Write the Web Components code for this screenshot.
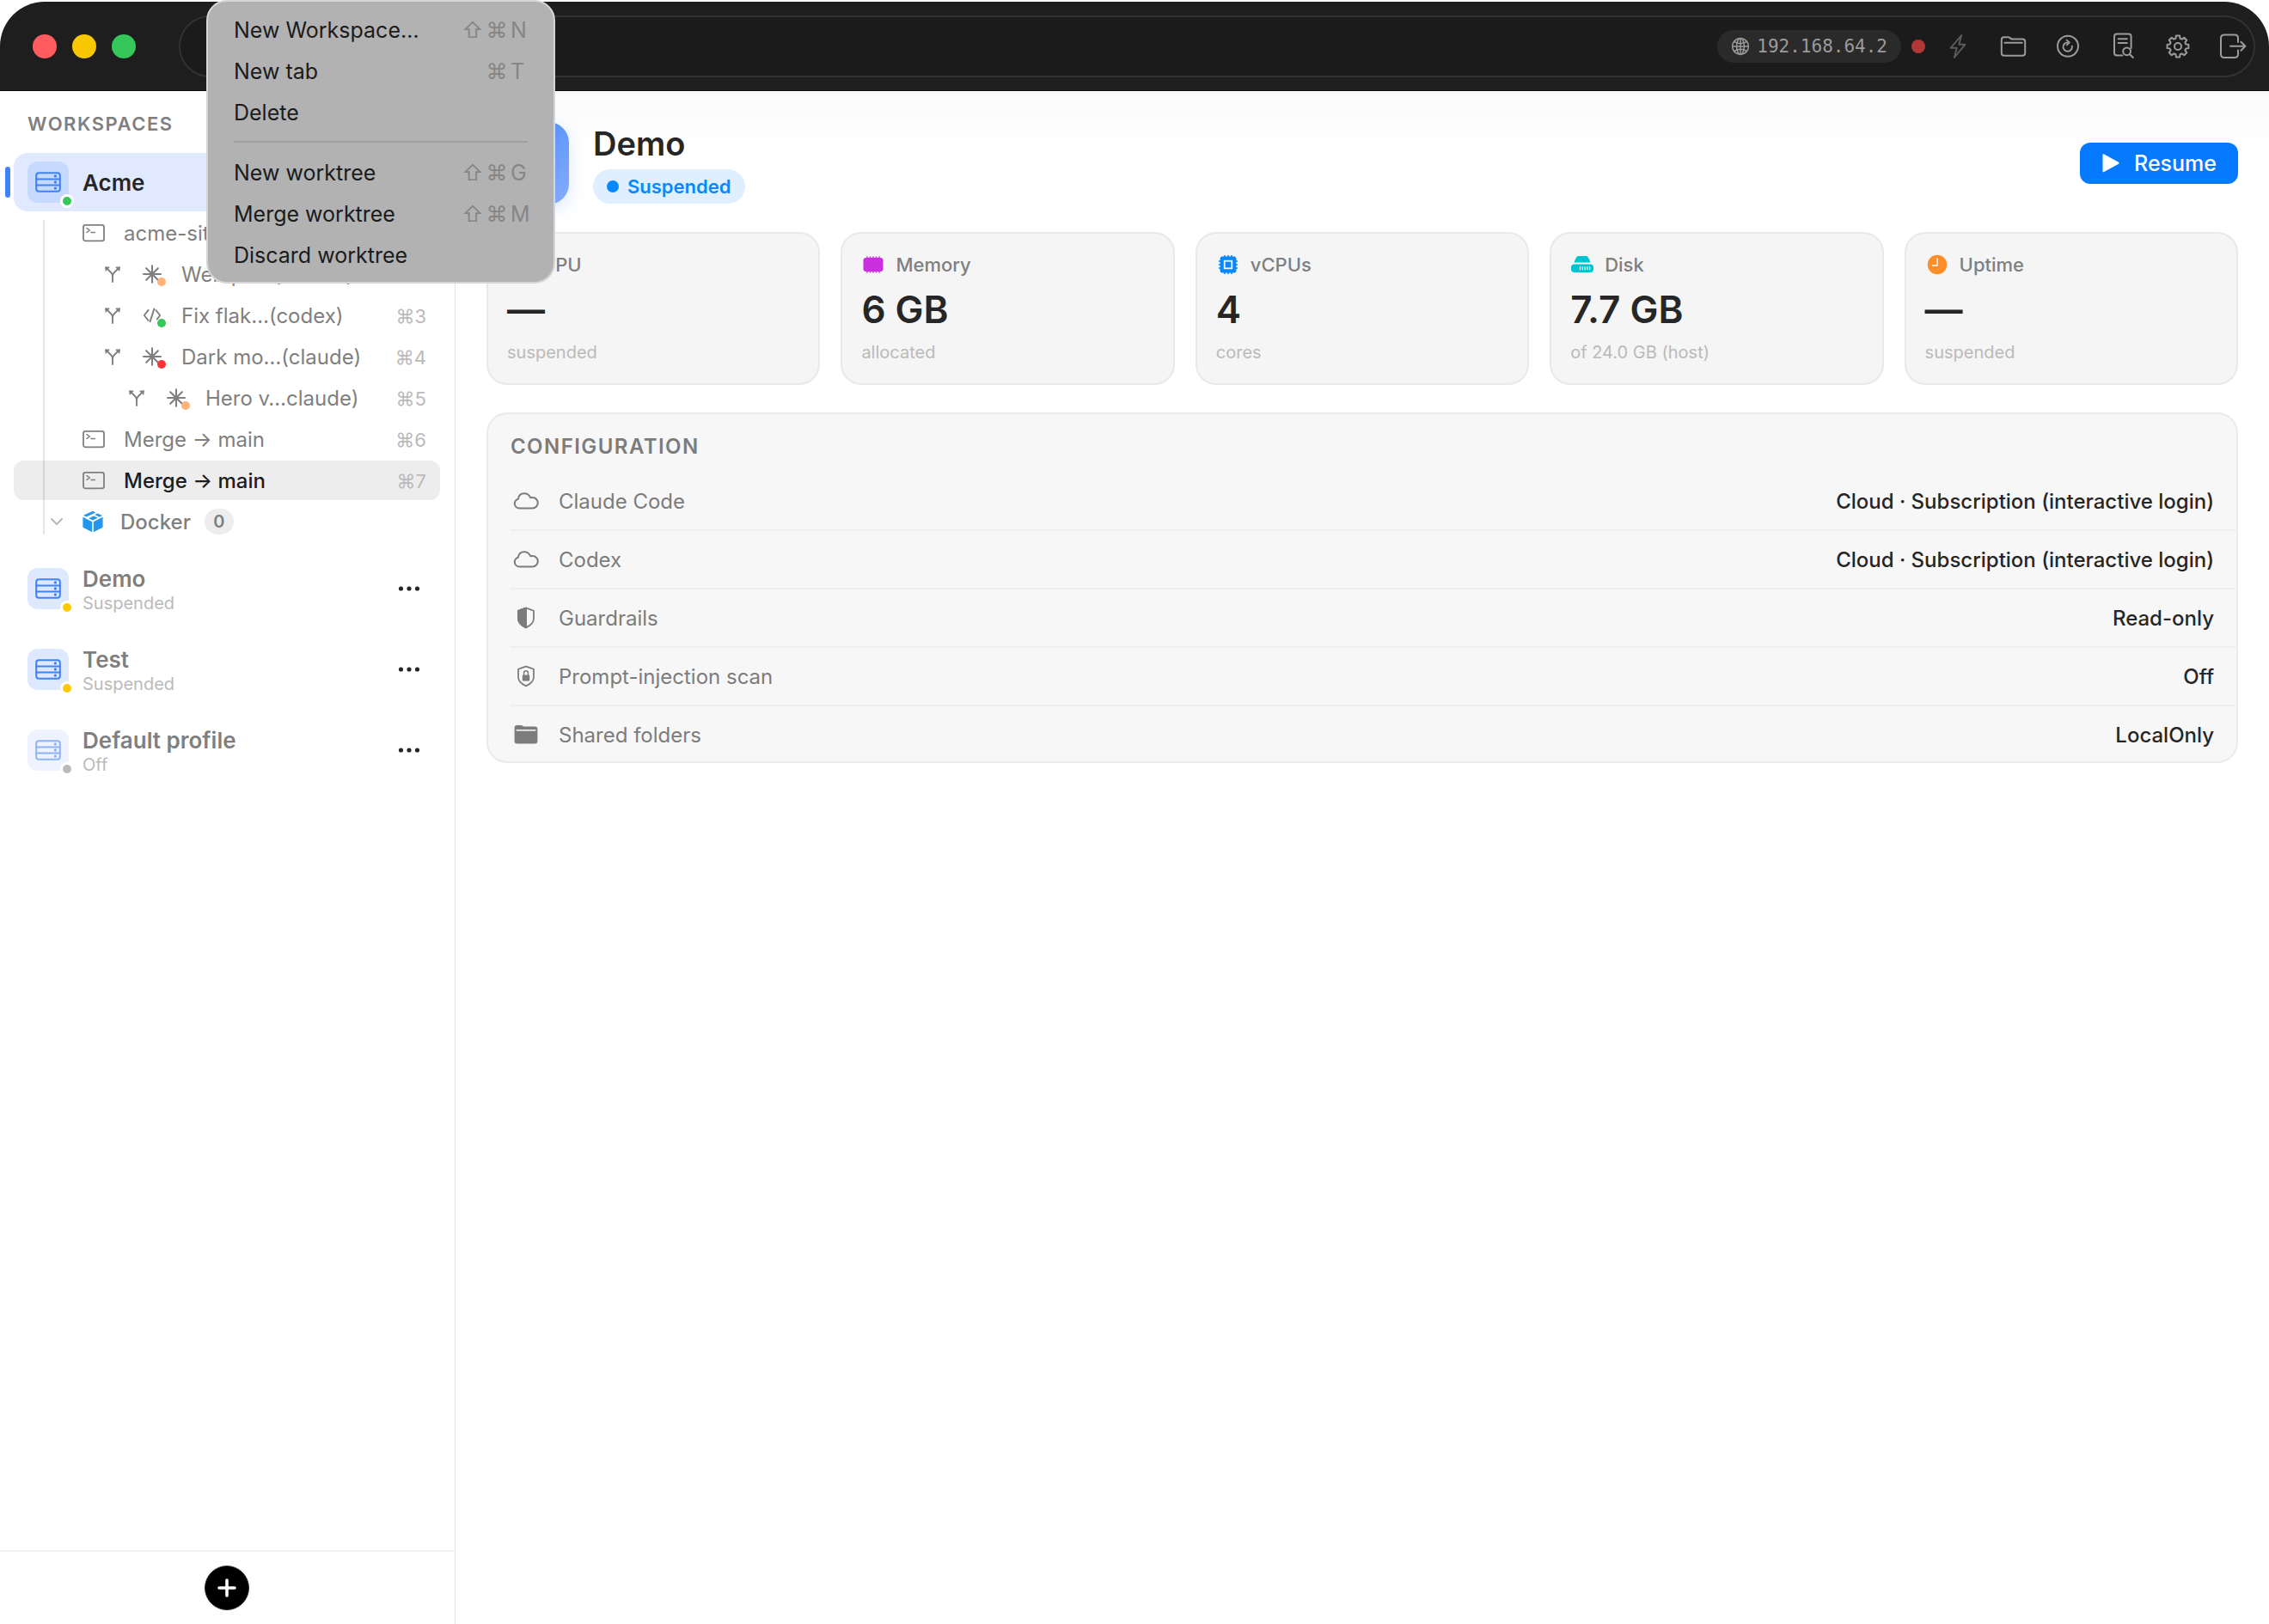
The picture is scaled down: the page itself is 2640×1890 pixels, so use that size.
<!DOCTYPE html>
<html lang="en">
<head>
<meta charset="utf-8">
<title>Workspaces</title>
<style>
  :root {
    --ink: #262626;
    --muted: #7f7f7f;
    --faint: #bababa;
    --accent: #067aff;
    --blue: #3f82f7;
  }
  * { box-sizing: border-box; }
  body {
    margin: 0;
    min-height: 100vh;
    background: #fff;
    color: var(--ink);
    font-family: Inter, "Noto Sans", sans-serif;
    font-size: 24px;
    line-height: 32px;
    display: flex;
    flex-direction: column;
    position: relative;
  }
  .body { flex: 1; display: flex; align-items: stretch; }
</style>
</head>
<body>
  <title-bar address="192.168.64.2"></title-bar>

  <div class="body">
    <side-bar heading="Workspaces">
      <workspace-item name="Acme" state="running" selected></workspace-item>
      <session-tree>
        <session-row icon="terminal" label="acme-site" keys="⌘1"></session-row>
        <session-row level="1" icon="spark" dot="#ffb27a" label="Web pe…(claude)" keys="⌘2"></session-row>
        <session-row level="1" icon="code" dot="#34c759" label="Fix flak…(codex)" keys="⌘3"></session-row>
        <session-row level="1" icon="spark" dot="#ff3337" label="Dark mo…(claude)" keys="⌘4"></session-row>
        <session-row level="2" icon="spark" dot="#ffb27a" label="Hero v…claude)" keys="⌘5"></session-row>
        <session-row icon="terminal" label="Merge → main" keys="⌘6"></session-row>
        <session-row icon="terminal" label="Merge → main" keys="⌘7" selected></session-row>
        <docker-row count="0">Docker</docker-row>
      </session-tree>
      <workspace-item name="Demo" status="Suspended" state="suspended"></workspace-item>
      <workspace-item name="Test" status="Suspended" state="suspended"></workspace-item>
      <workspace-item name="Default profile" status="Off" state="off"></workspace-item>
    </side-bar>

    <workspace-detail name="Demo" status="Suspended" action="Resume">
      <stat-card slot="stats" icon="gauge" label="CPU" value="—" note="suspended"></stat-card>
      <stat-card slot="stats" icon="memory" label="Memory" value="6 GB" note="allocated"></stat-card>
      <stat-card slot="stats" icon="cpu" label="vCPUs" value="4" note="cores"></stat-card>
      <stat-card slot="stats" icon="disk" label="Disk" value="7.7 GB" note="of 24.0 GB (host)"></stat-card>
      <stat-card slot="stats" icon="clock" label="Uptime" value="—" note="suspended"></stat-card>
      <config-panel heading="Configuration">
        <config-row icon="cloud" label="Claude Code">Cloud · Subscription (interactive login)</config-row>
        <config-row icon="cloud" label="Codex">Cloud · Subscription (interactive login)</config-row>
        <config-row icon="shieldHalf" label="Guardrails">Read-only</config-row>
        <config-row icon="shieldLock" label="Prompt-injection scan">Off</config-row>
        <config-row icon="folderFill" label="Shared folders">LocalOnly</config-row>
      </config-panel>
    </workspace-detail>
  </div>

  <context-menu>
    <menu-entry keys="⇧⌘N">New Workspace…</menu-entry>
    <menu-entry keys="⌘T">New tab</menu-entry>
    <menu-entry>Delete</menu-entry>
    <hr>
    <menu-entry keys="⇧⌘G">New worktree</menu-entry>
    <menu-entry keys="⇧⌘M">Merge worktree</menu-entry>
    <menu-entry>Discard worktree</menu-entry>
  </context-menu>

<script>
const svg = (w, h, body, attrs = 'fill="none" stroke="currentColor" stroke-width="2" stroke-linecap="round" stroke-linejoin="round"') =>
  `<svg xmlns="http://www.w3.org/2000/svg" width="${w}" height="${h}" viewBox="0 0 ${w} ${h}" ${attrs} aria-hidden="true">${body}</svg>`;
const FILL = 'fill="currentColor"';

const gearPath = (() => {
  // Eight rounded teeth around a 14px centre.
  const pts = [];
  for (let i = 0; i < 8; i++) {
    const a = i * Math.PI / 4 - Math.PI / 2;
    for (const [r, d] of [[9.6, -.27], [12.6, -.17], [12.6, .17], [9.6, .27]])
      pts.push((14 + r * Math.cos(a + d)).toFixed(2) + ' ' + (14 + r * Math.sin(a + d)).toFixed(2));
  }
  return 'M' + pts.join('L') + 'Z';
})();

const ICONS = {
  server: svg(30, 24, '<rect x="1.2" y="1.2" width="27.6" height="21.6" rx="3"/><path d="M1.2 8.4h27.6M1.2 15.6h27.6"/><g fill="currentColor" stroke="none"><circle cx="23.4" cy="4.9" r="1.7"/><circle cx="23.4" cy="12" r="1.7"/><circle cx="23.4" cy="19.1" r="1.7"/></g>'),
  terminal: svg(26, 22, '<rect x="1" y="1.8" width="24" height="18.6" rx="2.4" stroke-width="1.8"/><path d="M5 5.6l3.4 2.4L5 10.4M10 10.6h4.4" stroke-width="1.5"/>'),
  branch: svg(20, 20, '<path d="M10 19v-6.400q0-2.600-2-4.600L3.800 3.800M10 12.600q0-2.600 2-4.600L16.200 3.800" stroke-width="1.9"/><path d="M1 1.200l6 .6-5.200 5.200zM19 1.200l-6 .6 5.200 5.200z" fill="currentColor" stroke="none"/>'),
  spark: svg(24, 24, '<path d="M12 2.200v19.600M2 12h20M5.200 5.200l13.600 13.600M18.800 5.200L5.200 18.800" stroke-width="2.1"/>'),
  code: svg(24, 24, '<path d="M7.600 5.800L2.800 12l4.800 6M16.400 6l4.800 6-3.400 4.400M14.400 4.400L9.600 19.400" stroke-width="1.9"/>'),
  chevron: svg(16, 10, '<path d="M2 2l6 6 6-6" stroke-width="1.9"/>'),
  box: svg(24, 26, '<path d="M12 .8l3.200 1.600L4.600 7.600 1 5.800zM17.600 3.600L23 6l-3.400 1.700-5.200-2.600zM9.400 8.200L13 6.400l.1 0 4.600 2.300-5.700 2.900-4.900-2.400z"/><path d="M.6 7.800l10.600 5.400v12L.9 20q-.5-.3-.5-1V7.900zM23.400 7.800l-10.600 5.400v12L23.100 20q.5-.3.500-1V7.900z"/>', FILL),
  more: svg(28, 8, '<circle cx="4.500" cy="4" r="2.600"/><circle cx="14" cy="4" r="2.600"/><circle cx="23.500" cy="4" r="2.600"/>', FILL),
  plus: svg(24, 24, '<path d="M12 3v18M3 12h18" stroke-width="3.600"/>'),
  globe: svg(22, 22, '<circle cx="11" cy="11" r="9.400"/><ellipse cx="11" cy="11" rx="4.400" ry="9.400"/><path d="M11 1.600v18.800M1.600 11h18.800M3.600 5.400q7.400 4.600 14.800 0M3.600 16.600q7.400-4.600 14.800 0"/>', 'fill="none" stroke="currentColor" stroke-width="1.500"'),
  bolt: svg(32, 32, '<path d="M20.200 3L7.600 17.800h7.200L11.800 29 24.400 13.800h-7.200z" stroke-width="1.900"/>'),
  folder: svg(32, 32, '<path d="M2.800 8.200q0-3 3-3h4.400q1.400 0 2.400.9l1 .8q.9.700 2.200.7h11.400q3 0 3 3v13.200q0 3-3 3H5.800q-3 0-3-3zM6.400 11.800h20.400"/>'),
  restart: svg(32, 32, '<circle cx="16" cy="15.800" r="12"/><path d="M15.800 11.400a5.200 5.200 0 1 0 5 4.200M14.600 8.600l3.200 2.800-3 3" stroke-width="1.900"/>'),
  docSearch: svg(32, 32, '<path d="M15.400 26.600H9q-3 0-3-3V4.600q0-3 3-3h13.600q3 0 3 3V18M10.600 7.200h10.200M10.600 12h10.200"/><circle cx="20.600" cy="21.800" r="4.400"/><path d="M24 25.200l3.800 3.800"/>'),
  gear: svg(28, 28, `<path d="${gearPath}"/><circle cx="14" cy="14" r="4"/>`),
  exit: svg(32, 32, '<path d="M22 11V6.500q0-4-4-4H6q-4 0-4 4v18.400q0 4 4 4h12q4 0 4-4V20.500M13 15.700h16.500M25.400 10.700l5 5-5 5"/>'),
  play: svg(22, 24, '<path d="M1.500 2.600q0-1.800 1.600-1L20 10.800q1.600.9 0 1.900L3.100 22q-1.600.8-1.600-1z"/>', FILL),
  gauge: svg(26, 26, '<circle cx="13" cy="13" r="11"/><path d="M13 13l4.500-5"/>'),
  memory: svg(24, 20, '<rect x=".5" y="2" width="23" height="16" rx="3"/><path d="M5 .4v19.200M8.500 .4v19.200M12 .4v19.200M15.500 .4v19.200M19 .4v19.200" stroke="currentColor" stroke-width="1.600"/>', FILL),
  cpu: svg(24, 24, '<rect x="2.600" y="2.600" width="18.800" height="18.800" rx="2.500"/><path d="M8 .9v22.200M12 .9v22.200M16 .9v22.200M.9 8h22.200M.9 12h22.200M.9 16h22.200" stroke="currentColor" stroke-width="1.600"/><rect x="6.800" y="6.800" width="10.400" height="10.400" fill="#f5f5f5"/><rect x="8.600" y="8.600" width="6.800" height="6.800"/>', FILL),
  disk: svg(26, 20, '<path d="M6.500 1q.8-1 2.200-1h8.600q1.400 0 2.200 1 2 3 3 6.600H3.500Q4.500 4 6.500 1z"/><rect y="9.600" width="26" height="9.400" rx="4"/><path d="M10.500 12.300v4M13.300 12.300v4M16.100 12.300v4M18.900 12.300v4M21.700 12.300v4" stroke="#f5f5f5" stroke-width="1.200"/>', FILL),
  clock: svg(24, 24, '<circle cx="12" cy="12" r="11.200"/><path d="M12 4.500V13H6" fill="none" stroke="#fff" stroke-width="1.400"/>', FILL),
  cloud: svg(30, 22, '<path d="M7.400 19.400a5.400 5.400 0 0 1-1.600-10.600Q6.800 2.200 13 2.200q5 0 7.200 5 1.200-.4 2.600-.2a6.200 6.200 0 0 1-.4 12.400z"/>'),
  shieldHalf: svg(22, 26, '<path d="M11 1.600q4.600 1.200 9 3.200v9.200q0 6.200-9 10.400-9-4.200-9-10.400V4.800q4.400-2 9-3.200z" stroke-width="1.800"/><path d="M11 1.600v22.800Q2 20.200 2 14V4.800q4.400-2 9-3.200z" fill="currentColor"/>'),
  shieldLock: svg(22, 26, '<path d="M11 1.600q4.600 1.200 9 3.200v9.200q0 6.200-9 10.400-9-4.200-9-10.400V4.800q4.400-2 9-3.200z" stroke-width="1.800"/><rect x="6.800" y="11.400" width="8.400" height="7" rx="1" fill="currentColor" stroke="none"/><path d="M8.600 11.400V9.200a2.400 2.400 0 0 1 4.800 0v2.200" stroke-width="1.500"/>'),
  folderFill: svg(28, 24, '<path d="M.6 4q0-3 3-3h4.200q1.300 0 2.300.8l1 .8H24.400q3 0 3 3v14q0 3-3 3H3.600q-3 0-3-3z"/><path d="M2.600 6.900h22.800" stroke="#f7f7f7" stroke-width="1.600"/>', FILL)
};

/* Base class: renders a template into an open shadow root. */
class Part extends HTMLElement {
  connectedCallback() {
    if (this.shadowRoot) return;
    const root = this.attachShadow({ mode: 'open' });
    const t = document.createElement('template');
    t.innerHTML = `<style>*{box-sizing:border-box}button{font:inherit;color:inherit;background:none;border:0;padding:0;margin:0;display:inline-flex;align-items:center;justify-content:center}${this.css}</style>${this.html}`;
    root.append(t.content.cloneNode(true));
  }
  at(name) { return this.getAttribute(name) || ''; }
}

customElements.define('ui-icon', class extends Part {
  css = ':host{display:inline-flex;align-items:center;justify-content:center;flex:none}svg{display:block}';
  get html() { return ICONS[this.at('name')]; }
});

customElements.define('title-bar', class extends Part {
  css = `
    :host { display: flex; align-items: center; gap: 50px; height: 104px; margin-top: 2px; padding: 0 16px 0 38px;
      background: #1e1e1e; border-radius: 52px 52px 0 0; position: relative; z-index: 1; border-bottom: 1px solid #0f0f0f; }
    .lights { display: flex; gap: 18px; }
    .lights button { width: 28px; height: 28px; border-radius: 50%; }
    .bar { flex: 1; height: 72px; border: 2px solid #323232; border-radius: 36px; background: #1b1b1b;
      display: flex; align-items: center; justify-content: flex-end; padding-right: 8px; color: #9b9b9b; }
    .ip { height: 38px; border-radius: 19px; background: #2a2a2a; display: flex; align-items: center; gap: 8px;
      padding: 0 16px; font: 21px/38px "DejaVu Sans Mono", monospace; }
    .rec { width: 16px; height: 16px; border-radius: 50%; background: #b03838; margin: 0 22px 0 12px; }
    nav { display: flex; gap: 32px; }
    nav button { width: 32px; height: 32px; }
    .dim { color: #5c5c5c; }`;
  get html() { return `
    <div class="lights">
      <button aria-label="Close" style="background:#ff5c60"></button>
      <button aria-label="Minimize" style="background:#fac800"></button>
      <button aria-label="Zoom" style="background:#35c759"></button>
    </div>
    <div class="bar">
      <span class="ip"><ui-icon name="globe"></ui-icon>${this.at('address')}</span>
      <span class="rec"></span>
      <nav>
        <button class="dim" aria-label="Power"><ui-icon name="bolt"></ui-icon></button>
        <button aria-label="Files"><ui-icon name="folder"></ui-icon></button>
        <button aria-label="Restart"><ui-icon name="restart"></ui-icon></button>
        <button aria-label="Logs"><ui-icon name="docSearch"></ui-icon></button>
        <button aria-label="Settings"><ui-icon name="gear"></ui-icon></button>
        <button aria-label="Detach"><ui-icon name="exit"></ui-icon></button>
      </nav>
    </div>`; }
});

customElements.define('side-bar', class extends Part {
  css = `
    :host { display: flex; flex-direction: column; width: 530px; flex: none; padding-right: 1px; border-right: 1px solid #e3e3e3; background: #fff; }
    h2 { margin: 0; padding: 24px 32px 20px; font-size: 22px; line-height: 28px; font-weight: 600; letter-spacing: .07em;
      text-transform: uppercase; color: var(--muted); }
    .list { flex: 1; }
    footer { border-top: 2px solid #f1f1f1; padding: 16px; display: flex; justify-content: center; }
    footer button { width: 52px; height: 52px; border-radius: 50%; background: #000; color: #fff; border: 1px solid #333; }`;
  get html() { return `
    <h2>${this.at('heading')}</h2>
    <div class="list"><slot></slot></div>
    <footer><button aria-label="Add workspace"><ui-icon name="plus"></ui-icon></button></footer>`; }
});

customElements.define('workspace-item', class extends Part {
  css = `
    :host { display: block; padding: 13px 16px; }
    :host([selected]) { padding-block: 0; }
    .row { height: 68px; padding: 0 16px; border-radius: 16px; display: flex; align-items: center; gap: 16px; position: relative; }
    :host([selected]) .row { background: #e0e9fe; }
    :host([selected]) .row::before { content: ""; position: absolute; left: -10px; top: 16px; bottom: 16px; width: 6px;
      border-radius: 3px; background: var(--blue); }
    .tile { width: 48px; height: 48px; border-radius: 12px; background: #dee8ff; color: var(--blue); position: relative;
      display: flex; align-items: center; justify-content: center; }
    :host([selected]) .tile { background: #c6d9fe; }
    :host([state=off]) .tile { background: #eef3ff; }
    :host([state=off]) .tile ui-icon { opacity: .55; }
    .dot { position: absolute; right: -6px; bottom: -6px; width: 16px; height: 16px; border-radius: 50%;
      border: 3px solid #fff; background: #ffc800; }
    :host([state=running]) .dot { background: #34c759; }
    :host([state=off]) .dot { background: #b9b9b9; }
    .text { flex: 1; padding-top: 2px; }
    .name { font-size: 26px; line-height: 32px; font-weight: 600; color: var(--muted); }
    :host([selected]) .name { color: var(--ink); }
    .status { font-size: 20px; line-height: 24px; color: var(--faint); }
    button { width: 32px; height: 32px; color: var(--ink); margin-right: 4px; }`;
  get html() {
    const s = this.at('status');
    return `<div class="row">
      <span class="tile"><ui-icon name="server"></ui-icon><span class="dot"></span></span>
      <div class="text"><div class="name">${this.at('name')}</div>${s ? `<div class="status">${s}</div>` : ''}</div>
      <button aria-label="More"><ui-icon name="more"></ui-icon></button>
    </div>`; }
});

customElements.define('session-tree', class extends Part {
  css = `
    :host { display: flex; flex-direction: column; gap: 2px; padding: 2px 16px 8px; position: relative; }
    :host::after { content: ""; position: absolute; left: 50px; top: 10px; bottom: 16px; width: 2px; background: rgba(0,0,0,.1); }`;
  html = '<slot></slot>';
});

customElements.define('session-row', class extends Part {
  css = `
    :host { display: flex; align-items: center; gap: 22px; height: 46px; border-radius: 12px; padding: 0 16px 0 80px; color: var(--muted); }
    :host([level="1"]) { padding-left: 103px; }
    :host([level="2"]) { padding-left: 131px; }
    :host([selected]) { background: #ededed; }
    .icon { position: relative; display: flex; width: 24px; justify-content: center; }
    :host(:not([level])) .icon { width: 26px; }
    .dot { position: absolute; left: 18px; top: 16px; width: 10px; height: 10px; border-radius: 50%; }
    .label, .keys { padding-top: 2px; }
    .label { flex: 1; white-space: nowrap; }
    :host([selected]) .label { color: #1c1c1c; font-weight: 500; }
    .keys { font-size: 22px; color: var(--faint); }`;
  get html() {
    const dot = this.at('dot');
    return `${this.at('level') ? '<span class="icon"><ui-icon name="branch"></ui-icon></span>' : ''}
      <span class="icon"><ui-icon name="${this.at('icon')}"></ui-icon>${dot ? `<span class="dot" style="background:${dot}"></span>` : ''}</span>
      <span class="label">${this.at('label')}</span><span class="keys">${this.at('keys')}</span>`; }
});

customElements.define('docker-row', class extends Part {
  css = `
    :host { display: flex; align-items: center; gap: 20px; height: 46px; padding-left: 40px; color: var(--muted); font-weight: 500; }
    button { width: 20px; height: 20px; color: #b5b5b5; }
    .box { width: 24px; color: #2496ed; }
    .text { display: flex; align-items: center; gap: 16px; }
    .name { padding-top: 2px; }
    .count { width: 34px; height: 30px; border-radius: 15px; background: #ededed; font-size: 20px; line-height: 30px;
      font-weight: 600; text-align: center; }`;
  get html() { return `<button aria-label="Collapse"><ui-icon name="chevron"></ui-icon></button>
    <ui-icon class="box" name="box"></ui-icon>
    <span class="text"><span class="name"><slot></slot></span><span class="count">${this.at('count')}</span></span>`; }
});

customElements.define('workspace-detail', class extends Part {
  css = `
    :host { flex: 1; min-width: 0; display: flex; flex-direction: column; gap: 32px; padding: 36px;
      background: linear-gradient(#fafafa, #fcfcfc 24px, #fdfdfd 48px, #fff 64px); }
    header { display: flex; align-items: center; gap: 28px; }
    .tile { width: 96px; height: 96px; border-radius: 24px; background: linear-gradient(135deg, #3f82f7, #86adff);
      color: #fff; display: flex; align-items: center; justify-content: center; box-shadow: 0 6px 20px rgba(63,130,247,.2); }
    .title { flex: 1; display: flex; flex-direction: column; align-items: flex-start; gap: 6px; }
    h1 { margin: 0; font-size: 38px; line-height: 48px; font-weight: 600; }
    .pill { height: 40px; border-radius: 20px; background: #e0efff; color: #0788ff; padding: 0 16px; display: flex;
      align-items: center; gap: 10px; font-size: 22px; font-weight: 600; }
    .pill i { width: 14px; height: 14px; border-radius: 50%; background: currentColor; }
    .go { height: 48px; padding: 0 25px; border-radius: 12px; gap: 16px; background: var(--accent); color: #fff;
      font-size: 25px; font-weight: 500; }
    .stats { display: grid; grid-template-columns: repeat(5, minmax(0, 1fr)); gap: 24px; }`;
  get html() { return `
    <header>
      <span class="tile"><ui-icon name="server"></ui-icon></span>
      <div class="title"><h1>${this.at('name')}</h1><span class="pill"><i></i>${this.at('status')}</span></div>
      <button class="go"><ui-icon name="play"></ui-icon>${this.at('action')}</button>
    </header>
    <div class="stats"><slot name="stats"></slot></div>
    <slot></slot>`; }
});

customElements.define('stat-card', class extends Part {
  css = `
    :host { display: flex; flex-direction: column; gap: 12px; padding: 24px 24px 26px; border-radius: 24px; background: #f5f5f5;
      box-shadow: inset 0 0 0 2px #e9e9e9; }
    .label { display: flex; align-items: center; gap: 12px; font-size: 22px; line-height: 28px; font-weight: 500; color: var(--muted); }
    .label ui-icon { width: 28px; height: 28px; }
    [name=gauge] { color: #34c759; }
    [name=memory] { color: #cb30e0; }
    [name=cpu] { color: #0788ff; }
    [name=disk] { color: #00c3d0; }
    [name=clock] { color: #ff8d28; }
    .value { font-size: 44px; line-height: 52px; font-weight: 600; }
    .note { font-size: 20px; line-height: 24px; color: var(--faint); }`;
  get html() { return `<div class="label"><ui-icon name="${this.at('icon')}"></ui-icon>${this.at('label')}</div>
    <div class="value">${this.at('value')}</div><div class="note">${this.at('note')}</div>`; }
});

customElements.define('config-panel', class extends Part {
  css = `
    :host { display: block; padding-left: 28px; border-radius: 24px; background: #f7f7f7; box-shadow: inset 0 0 0 2px #ebebeb; }
    h2 { margin: 0; padding: 24px 0 14px; font-size: 24px; line-height: 32px; font-weight: 600; letter-spacing: .06em;
      text-transform: uppercase; color: #7c7c7c; }`;
  get html() { return `<h2>${this.at('heading')}</h2><slot></slot>`; }
});

customElements.define('config-row', class extends Part {
  css = `
    :host { display: block; }
    :host(:not(:last-child)) { border-bottom: 2px solid #eeeeee; }
    .row { height: 66px; display: flex; align-items: center; gap: 20px; padding-right: 28px; }
    ui-icon { width: 36px; color: #7c7c7c; }
    .label, .value { padding-top: 2px; }
    .label { flex: 1; color: #7c7c7c; }
    .value { font-weight: 500; }`;
  get html() { return `<div class="row"><ui-icon name="${this.at('icon')}"></ui-icon><span class="label">${this.at('label')}</span><span class="value"><slot></slot></span></div>`; }
});

customElements.define('context-menu', class extends Part {
  css = `
    :host { position: absolute; left: 240px; top: 0; z-index: 2; width: 406px; padding: 9px 30px 7px; border: 2px solid #d6d6d6;
      border-radius: 24px; background: #b2b2b2; color: #1b1b1b; }
    ::slotted(hr) { height: 2px; margin: 9px 0 11px; border: 0; background: #9f9f9f; }`;
  html = '<slot></slot>';
});

customElements.define('menu-entry', class extends Part {
  css = `
    :host { display: block; }
    button { width: 100%; height: 48px; justify-content: space-between; font-size: 25px; }
    .keys { display: grid; grid-template-columns: 28px 28px 22px; color: #868686; }
    .keys span { text-align: center; }
    .keys span:last-child { grid-column: 3; text-align: left; padding-left: 2px; }
    .cmd { grid-column: 2; }`;
  get html() {
    const keys = [...this.at('keys')].map(k => `<span${k === '⌘' ? ' class="cmd"' : ''}>${k}</span>`).join('');
    return `<button role="menuitem"><slot></slot>${keys ? `<span class="keys">${keys}</span>` : ''}</button>`; }
});
</script>
</body>
</html>
